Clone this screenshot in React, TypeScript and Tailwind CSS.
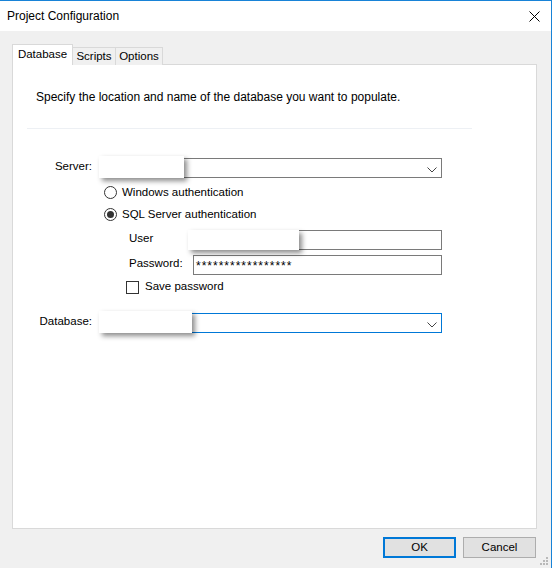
import { useState } from 'react';

const font = { fontFamily: '"Liberation Sans", Arial, sans-serif' };

function Chevron() {
  return (
    <svg width="10" height="6" viewBox="0 0 10 6" className="absolute right-[4px] top-[8px]">
      <path d="M0.5 0.5 L5 5 L9.5 0.5" fill="none" stroke="#444" strokeWidth="1" />
    </svg>
  );
}

function Redact({ className }: { className: string }) {
  return <div className={`absolute bg-white shadow-[3px_3px_5px_rgba(0,0,0,0.45)] ${className}`} />;
}

function Radio({ checked, label }: { checked?: boolean; label: string }) {
  return (
    <div className="flex items-center h-[16px] gap-[5px]">
      <div className="w-[13px] h-[13px] rounded-full border border-[#333] bg-white flex items-center justify-center">
        {checked && <div className="w-[7px] h-[7px] rounded-full bg-[#333]" />}
      </div>
      <span className="text-[11.5px] pt-[2px]">{label}</span>
    </div>
  );
}

export default function App() {
  const [tab] = useState('Database');
  const tabs = [
    { name: 'Database', w: 'w-[61px]' },
    { name: 'Scripts', w: 'w-[43px]' },
    { name: 'Options', w: 'w-[47px]' },
  ];
  return (
    <div
      style={font}
      className="w-[552px] h-[568px] flex flex-col bg-[#f0f0f0] border-t border-r border-[#1883d7] text-[12px] text-black overflow-hidden"
    >
      <header className="h-[30px] bg-white flex items-center justify-between pl-[7px] pr-[11px]">
        <span className="text-[12px]">Project Configuration</span>
        <svg width="11" height="11" viewBox="0 0 11 11">
          <path d="M0.5 0.5 L10.5 10.5 M10.5 0.5 L0.5 10.5" stroke="#000" strokeWidth="1" />
        </svg>
      </header>

      <div className="flex-1 flex flex-col pl-[12px] pt-[13px] relative">
        <div className="flex items-end h-[21px] relative z-10">
          {tabs.map((t) =>
            t.name === tab ? (
              <div
                key={t.name}
                className={`h-[21px] ${t.w} bg-white border border-b-0 border-[#d9d9d9] flex items-center justify-center pb-[1px] text-[11.5px]`}
              >
                {t.name}
              </div>
            ) : (
              <div
                key={t.name}
                className={`h-[18px] ${t.w} bg-[#f0f0f0] border border-l-0 border-b-0 border-[#d9d9d9] flex items-center justify-center text-[11.5px]`}
              >
                {t.name}
              </div>
            )
          )}
        </div>

        <div className="w-[525px] h-[465px] -mt-[1px] bg-white border border-[#d9d9d9] flex flex-col">
          <p className="mt-[24px] ml-[23px] h-[16px] leading-[16px]">
            Specify the location and name of the database you want to populate.
          </p>
          <div className="mt-[23px] ml-[14px] w-[445px] h-px bg-[#edf0f4]" />

          <div className="mt-[29px] flex items-center h-[20px] relative">
            <span className="w-[79px] text-right text-[11.5px] -mt-[3px]">Server:</span>
            <div className="ml-[7px] w-[343px] h-[20px] border border-[#7a7a7a] bg-white relative">
              <Chevron />
            </div>
            <Redact className="left-[86px] -top-[2px] w-[85px] h-[22px]" />
          </div>

          <div className="mt-[6px] ml-[91px] flex flex-col gap-[6px]">
            <Radio label="Windows authentication" />
            <Radio checked label="SQL Server authentication" />
          </div>

          <div className="mt-[8px] ml-[116px] flex flex-col text-[11.5px]">
            <div className="flex items-center h-[20px] relative">
              <span className="w-[64px] -mt-[3px]">User</span>
              <div className="w-[249px] h-[20px] border border-[#7a7a7a] bg-white" />
              <Redact className="left-[59px] top-0 w-[111px] h-[20px]" />
            </div>
            <div className="mt-[5px] flex items-center h-[20px]">
              <span className="w-[64px] -mt-[3px]">Password:</span>
              <div className="w-[249px] h-[20px] border border-[#7a7a7a] bg-white flex items-center pl-[2px]">
                <span className="tracking-[1px] text-[12px] leading-[12px] pt-[1px]">*****************</span>
              </div>
            </div>
            <div className="mt-[4px] h-[16px] flex items-center gap-[6px] -ml-[3px]">
              <div className="w-[13px] h-[13px] border border-[#333] bg-white" />
              <span>Save password</span>
            </div>
          </div>

          <div className="mt-[18px] flex items-center h-[20px] relative">
            <span className="w-[79px] text-right text-[11.5px] -mt-[3px]">Database:</span>
            <div className="ml-[7px] w-[343px] h-[20px] border border-[#0078d7] bg-white relative">
              <Chevron />
            </div>
            <Redact className="left-[86px] -top-[2px] w-[93px] h-[22px]" />
          </div>
        </div>

        <div className="mt-[8px] flex justify-end gap-[7px] pr-[15px]">
          <button className="w-[73px] h-[21px] bg-[#e1e1e1] border-2 border-[#0078d7] flex items-center justify-center text-[11.5px]">
            OK
          </button>
          <button className="w-[73px] h-[21px] bg-[#e1e1e1] border border-[#adadad] flex items-center justify-center text-[11.5px]">
            Cancel
          </button>
        </div>

        <svg width="10" height="10" viewBox="0 0 10 10" className="absolute right-[2px] bottom-[2px]">
          <rect x="7" y="1" width="2" height="2" fill="#b9b9b9" />
          <rect x="4" y="4" width="2" height="2" fill="#b9b9b9" />
          <rect x="7" y="4" width="2" height="2" fill="#b9b9b9" />
          <rect x="1" y="7" width="2" height="2" fill="#b9b9b9" />
          <rect x="4" y="7" width="2" height="2" fill="#b9b9b9" />
          <rect x="7" y="7" width="2" height="2" fill="#b9b9b9" />
        </svg>
      </div>
    </div>
  );
}
